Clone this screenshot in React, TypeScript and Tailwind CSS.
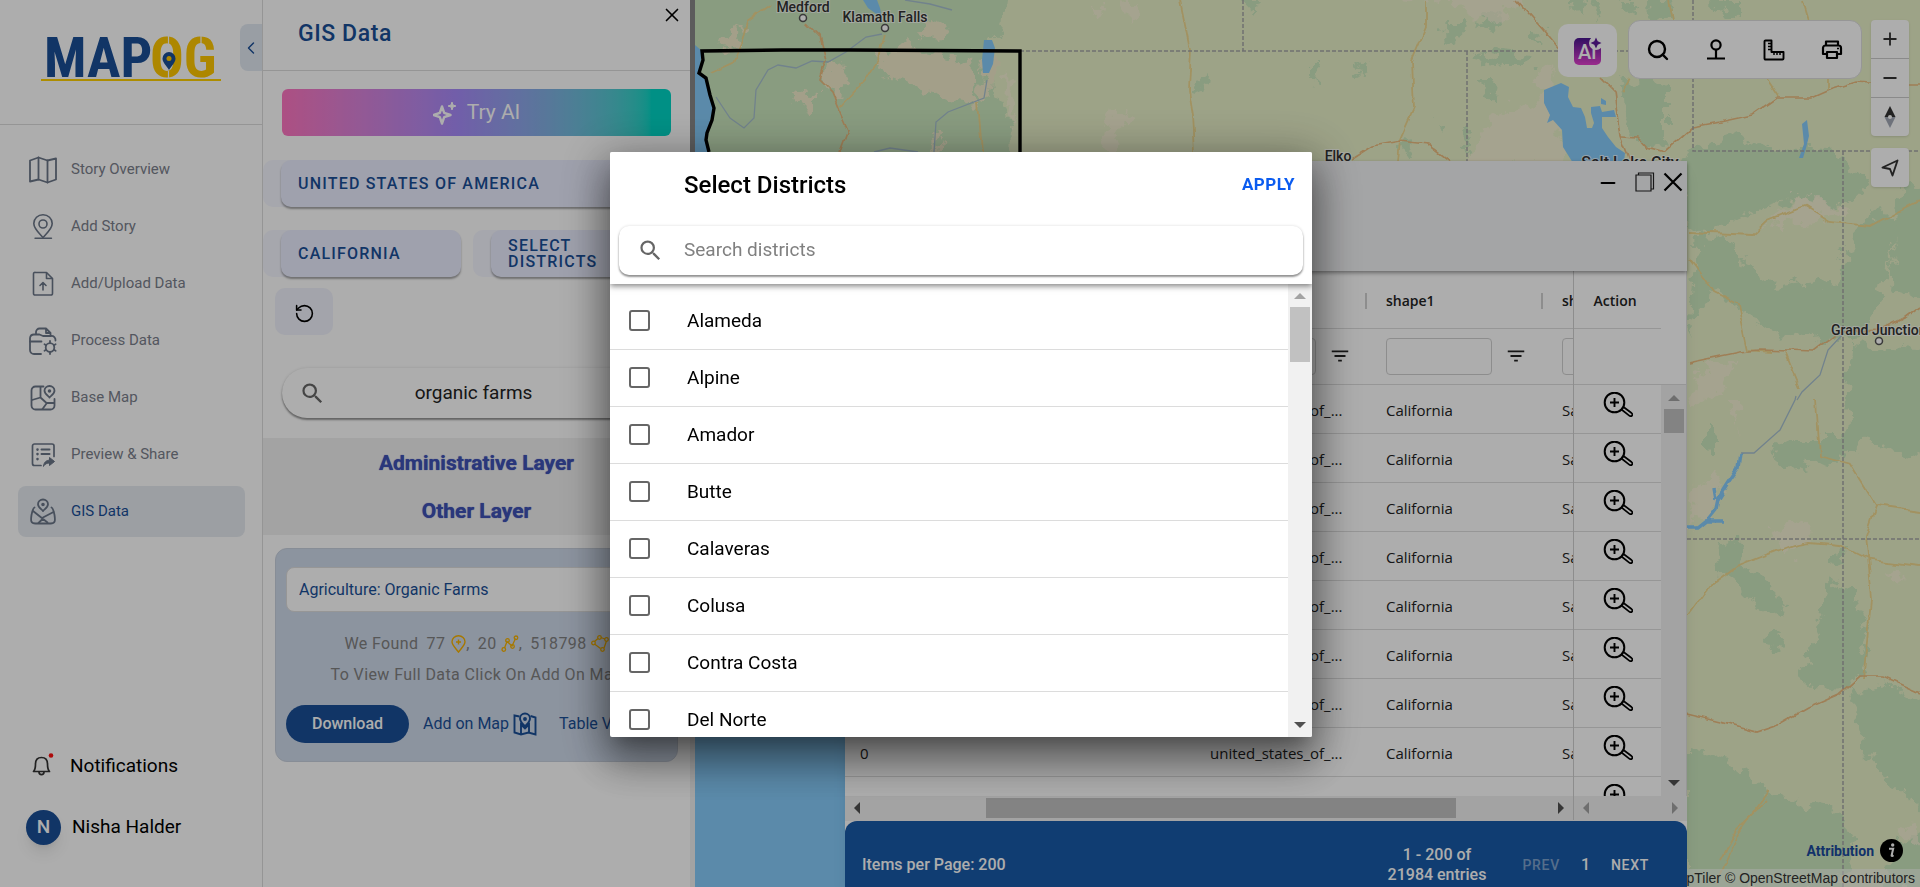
import React, { useState } from 'react';
import { Minus, Plus, RotateCcw, Search, X, ChevronLeft } from 'lucide-react';
import { MdSearch, MdFilterList } from 'react-icons/md';

const districts = ['Alameda', 'Alpine', 'Amador', 'Butte', 'Calaveras', 'Colusa', 'Contra Costa', 'Del Norte'];

const iconProps = {
  width: 28,
  height: 28,
  viewBox: '0 0 28 28',
  fill: 'none',
  stroke: 'currentColor',
  strokeWidth: 1.8,
  strokeLinecap: 'round' as const,
  strokeLinejoin: 'round' as const,
};

const StoryIcon = () => (
  <svg {...iconProps}>
    <path d="M1 4.5 9.5 1.5 18.5 4.5 27 2.5V23.500L18.500 26.500 9.500 23.500 1 25.500Z" />
    <path d="M9.500 1.500V23.500M18.500 4.500V26.500" />
  </svg>
);

const PinIcon = () => (
  <svg {...iconProps} strokeWidth={1.6}>
    <path d="M14 24.500C9 19 4.800 15.500 4.800 10.500a9.200 8.800 0 0 1 18.400 0C23.200 15.500 19 19 14 24.500Z" />
    <circle cx="14" cy="11" r="4" />
    <path d="M6 25.300H22.500" strokeWidth={1.4} />
  </svg>
);

const UploadIcon = () => (
  <svg {...iconProps} strokeWidth={1.6}>
    <path d="M6.500 2.500H17.500L23.500 8.500V23.500a1.500 1.500 0 0 1-1.500 1.500H6a1.500 1.500 0 0 1-1.500-1.500V4A1.500 1.500 0 0 1 6.500 2.500Z" />
    <path d="M17.500 3V8.500H23" />
    <path d="M14 20V13M11 15.500 14 12.500 17 15.500" />
  </svg>
);

const ProcessIcon = () => (
  <svg {...iconProps}>
    <path d="M12 27H5a4 4 0 0 1-4-4V11a4 4 0 0 1 4-3.500H10.500L14 9H22a4 4 0 0 1 4.500 4.500" />
    <path d="M7 7V5a3.500 3.500 0 0 1 3.500-3.500H17L21.500 6V9M17 2V6H21" />
    <path d="M1 14.500H12.500" />
    <circle cx="21" cy="20.500" r="4.300" />
    <path d="M21 14V16M21 25V27M15.500 17.300 17 18.200M25 22.800 26.600 23.700M15.500 23.700 17 22.800M25 18.200 26.600 17.300" />
  </svg>
);

const BaseMapIcon = () => (
  <svg {...iconProps}>
    <path d="M14.500 2.500H6.500A4 4 0 0 0 2.500 6.500V21.500A4 4 0 0 0 6.500 25.500H21.500A4 4 0 0 0 25.500 21.500V15" />
    <path d="M11.500 3V13.500L17.500 19H25M11.500 13.500 3 16M17.500 19.500 13.500 25" />
    <path d="M20.500 13.500C18 11 15.500 9.500 15.500 6.800a5 4.800 0 0 1 10 0C25.500 9.500 23 11 20.500 13.500Z" />
    <circle cx="20.500" cy="7" r="0.900" fill="currentColor" />
  </svg>
);

const PreviewIcon = () => (
  <svg {...iconProps} strokeWidth={1.700}>
    <path d="M12 24.500H5.500A2 2 0 0 1 3.500 22.500V5A2 2 0 0 1 5.500 3H23A2 2 0 0 1 25 5V15.500" />
    <path d="M12.500 8.500H20.500M12.500 13H20.500" strokeWidth={2} />
    <path d="M8.500 8.500V8.600M8.500 13V13.100M8.500 18V18.100" strokeWidth={2.600} />
    <path d="M14.500 25C15 20.500 18 19.200 20.500 19.200V16.500L25.500 20.500 20.500 24.500V22C18 22 16.500 22.800 14.500 25Z" fill="currentColor" strokeWidth={1} />
  </svg>
);

const GisIcon = () => (
  <svg {...iconProps}>
    <path d="M14 13C11.500 10.500 9 9 9 6.300a5 4.800 0 0 1 10 0C19 9 16.500 10.500 14 13Z" />
    <circle cx="14" cy="6.500" r="0.900" fill="currentColor" />
    <path d="M5.500 9.500C4 10 3.500 12 2.500 17 1.500 23.500 2 25.500 6.500 25.500H21.500C26 25.500 26.500 23.500 25.500 17 24.500 12 24 10 22.500 9.500" />
    <path d="M4 13 18.500 24.500M24.500 14 13 20M14 20.500 9.500 25" />
  </svg>
);

const navItems = [
  { label: 'Story Overview', icon: <StoryIcon /> },
  { label: 'Add Story', icon: <PinIcon /> },
  { label: 'Add/Upload Data', icon: <UploadIcon /> },
  { label: 'Process Data', icon: <ProcessIcon /> },
  { label: 'Base Map', icon: <BaseMapIcon /> },
  { label: 'Preview & Share', icon: <PreviewIcon /> },
  { label: 'GIS Data', icon: <GisIcon />, active: true },
];

const Logo = () => (
  <svg className="overflow-visible" width="182" height="60" viewBox="40 24 182 60" role="img" aria-label="MAPOG">
    <g fontFamily="'Liberation Sans Narrow', 'Roboto Condensed', Roboto, sans-serif" fontWeight="700" fontSize="56">
      <text x="44" y="77" fill="#1a4f97">MAP</text>
      <text x="150" y="77" fill="#ffc700">OG</text>
    </g>
    <path d="M41 80H221" stroke="#ffd000" strokeWidth="2" />
    <path d="M169 70C166 65 162.500 62.500 162.500 58.500a6.500 6.500 0 0 1 13 0C175.500 62.500 172 65 169 70Z" fill="#1a4f97" />
    <circle cx="169" cy="58.500" r="2.500" fill="#ffc700" />
    <path d="M168.500 36V44M168.500 71V78M201 36V44" stroke="#fff" strokeWidth="1.200" />
  </svg>
);

const Sidebar = () => (
  <aside className="flex w-[263px] shrink-0 flex-col border-r border-[#dcdcdc] bg-white">
    <div className="flex h-[125px] items-start justify-between border-b border-[#dcdcdc] pl-10 pt-6">
      <Logo />
      <button aria-label="Collapse" className="flex h-[47px] w-[22px] items-center justify-center rounded-l-lg bg-[#e2e9f2] text-[#1a4f97]">
        <ChevronLeft size={20} strokeWidth={1.700} />
      </button>
    </div>
    <nav className="flex flex-col gap-[6px] px-[18px] pr-[17px] pt-[19px]">
      {navItems.map((item) => (
        <a
          key={item.label}
          href="#"
          className={`flex h-[51px] items-center rounded-lg pl-[11px] text-[15px] text-[#6b7688] ${item.active ? 'bg-[#e6ebf1]' : ''}`}
        >
          {item.icon}
          <span className={item.active ? 'ml-3.5 text-[#1a4f97]' : 'ml-3.5 text-[#7b808c]'}>{item.label}</span>
        </a>
      ))}
    </nav>
    <div className="mt-auto flex flex-col gap-[25px] pb-[42px] pl-[26px] text-[19px]">
      <button className="flex h-9 items-center">
        <svg width="34" height="30" viewBox="0 0 34 30" fill="none" stroke="#333" strokeWidth="1.700">
          <path d="M7.500 20.500H23.500C21.500 18.500 21.500 16 21.500 13 21.500 8.500 19 6.500 15.500 6.500S9.500 8.500 9.500 13C9.500 16 9.500 18.500 7.500 20.500Z" strokeLinejoin="round" />
          <path d="M13 21C13 24.500 18 24.500 18 21" />
          <circle cx="25" cy="4.500" r="2.300" fill="#ff1010" stroke="none" />
        </svg>
        <span className="ml-[10px]">Notifications</span>
      </button>
      <button className="flex h-9 items-center">
        <span className="flex size-[35px] items-center justify-center rounded-full bg-[#1a4f97] font-medium text-white shadow-lg">N</span>
        <span className="ml-[11px]">Nisha Halder</span>
      </button>
    </div>
  </aside>
);

const GisPanel = () => (
  <section className="flex min-h-0 w-[427px] shrink-0 flex-col bg-white">
    <header className="flex h-[71px] items-start justify-between border-b border-[#dcdcdc] pl-[35px]">
      <h1 className="mt-[21px] text-[23px] font-medium leading-[26px] tracking-wide text-[#1a4f97]">GIS Data</h1>
      <button aria-label="Close panel" className="mr-[7px] mt-1">
        <X size={22} strokeWidth={1.800} />
      </button>
    </header>
    <button className="mx-[19px] mt-[18px] flex h-[47px] items-center justify-center rounded-md bg-linear-to-r from-[#ff76c1] via-[#a78bfa] via-45% to-[#00d5c5] to-95% text-[21px] text-white">
      <svg width="24" height="24" viewBox="0 0 24 24" fill="none" stroke="#fff" strokeWidth="2.400" strokeLinejoin="round">
        <path d="M9 5.500 11.200 11.800 17.500 14 11.200 16.200 9 22.500 6.800 16.200 0.800 14 6.800 11.800Z" />
        <path d="M19 1 20 4 23 5 20 6 19 9 18 6 15 5 18 4Z" strokeWidth="1" fill="#fff" />
      </svg>
      <span className="ml-2.5">Try AI</span>
    </button>
    <div className="mr-[19px] mt-6 rounded-[10px] bg-[#f5f6ff] pl-[18px]">
      <button className="flex h-[47px] w-full items-center rounded-[10px] bg-[#ebeeff] px-[17px] font-medium tracking-[0.075em] text-[#1a4f97] shadow-[0_2px_2px_rgba(0,0,0,0.35)]">
        UNITED STATES OF AMERICA
      </button>
    </div>
    <div className="mr-[19px] mt-[23px] flex gap-3">
      <div className="flex-1 rounded-[10px] bg-[#f5f6ff] pl-[18px]">
        <button className="flex h-[47px] w-full items-center rounded-[10px] bg-[#ebeeff] px-[17px] font-medium tracking-[0.075em] text-[#1a4f97] shadow-[0_2px_2px_rgba(0,0,0,0.35)]">
          CALIFORNIA
        </button>
      </div>
      <div className="flex-1 rounded-[10px] bg-[#f5f6ff] pl-[18px]">
        <button className="flex h-[47px] w-full items-center rounded-[10px] bg-[#ebeeff] px-[17px] text-left font-medium leading-4 tracking-[0.075em] text-[#1a4f97] shadow-[0_2px_2px_rgba(0,0,0,0.35)]">
          SELECT
          <br />
          DISTRICTS
        </button>
      </div>
    </div>
    <button aria-label="Reset" className="ml-3 mt-[11px] flex h-[47px] w-[58px] items-center justify-center rounded-[10px] bg-[#f0f2fc] pt-1">
      <RotateCcw size={21} strokeWidth={1.800} />
    </button>
    <label className="mx-[19px] mt-[33px] flex h-[50px] items-center rounded-full bg-white pl-[17px] shadow-[0_2px_2px_rgba(0,0,0,0.4),0_0_3px_rgba(0,0,0,0.12)]">
      <MdSearch size={27} className="text-[#666]" />
      <input aria-label="Search layers" defaultValue="organic farms" className="min-w-0 flex-1 bg-transparent pr-[50px] text-center text-[19px] text-[#222] outline-none" />
    </label>
    <div className="mt-5 flex flex-col bg-[#f1f1f1] pt-px text-center text-[21px] font-bold leading-[48px] text-[#3f51b5] [text-shadow:0_0_1px_#3f51b5]">
      <h2>Administrative Layer</h2>
      <h2>Other Layer</h2>
    </div>
    <div className="mx-3 mt-[13px] rounded-xl border border-[#c8d0dd] bg-[#cfdaeb] px-[10px] pb-[18px] pt-[18px] text-[#1a4f97]">
      <input aria-label="Layer" readOnly defaultValue="Agriculture: Organic Farms" className="h-[45px] w-full rounded-lg border border-[#ddd] bg-white px-3 outline-none" />
      <p className="mt-4 flex h-[31px] items-center justify-center gap-2 tracking-wide text-[#808080]">
        <span>We Found</span>
        <span className="flex items-center">
          77
          <svg className="ml-1.5" width="15" height="18" viewBox="0 0 15 18" fill="none" stroke="#f5b100" strokeWidth="1.400">
            <path d="M7.500 17C4 12.500 1 10 1 6.800a6.500 6 0 0 1 13 0C14 10 11 12.500 7.500 17ZM7.500 4.500V9.500M5 7H10" />
          </svg>
          ,
        </span>
        <span className="flex items-center">
          20
          <svg className="ml-1" width="18" height="18" viewBox="0 0 18 18" fill="none" stroke="#f5b100" strokeWidth="1.300">
            <path d="M3.500 13 6 6.500 11 11 14.500 3.500" />
            <circle cx="2.800" cy="14.500" r="1.800" />
            <circle cx="6.500" cy="5.500" r="1.800" />
            <circle cx="11.500" cy="11.500" r="1.800" />
            <circle cx="15" cy="2.800" r="1.800" />
          </svg>
          ,
        </span>
        <span className="flex items-center">
          518798
          <svg className="ml-1" width="18" height="18" viewBox="0 0 18 18" fill="none" stroke="#f5b100" strokeWidth="1.300">
            <path d="M3.500 6.500 7 3.500M9.800 2.500 14 4M15.500 6 13 13M3.500 9 9.500 13.500" />
            <circle cx="2.500" cy="8" r="1.800" />
            <circle cx="8.500" cy="2.500" r="1.800" />
            <circle cx="15.500" cy="4.500" r="1.800" />
            <circle cx="11.500" cy="14.500" r="1.800" />
          </svg>
        </span>
      </p>
      <p className="h-[31px] whitespace-nowrap text-center leading-[31px] tracking-wide text-[#808080]">
        To View Full Data Click On Add On Map
      </p>
      <div className="mt-[15px] flex items-center whitespace-nowrap">
        <button className="h-[38px] w-[123px] rounded-full bg-[#1a4f97] font-medium text-white">Download</button>
        <button className="ml-3.5 flex items-center gap-1">
          Add on Map
          <svg width="24" height="24" viewBox="0 0 24 24" fill="none" stroke="#1a4f97" strokeWidth="1.900">
            <path d="M6.500 4.500 1.500 3.500V20.500L8 22.500 15.500 20.500 22.500 22.500V5.500L17.500 4" />
            <path d="M12 14.500C9.500 11.500 7 9.500 7 6.500a5 5 0 0 1 10 0C17 9.500 14.500 11.500 12 14.500ZM8 22V12.500L12 16.500 16 12.500V20.500" />
            <circle cx="12" cy="7" r="1" fill="#1a4f97" />
          </svg>
        </button>
        <button className="ml-[22px]">Table View</button>
      </div>
    </div>
  </section>
);

const MapCanvas = () => (
  <svg className="absolute inset-0 h-full w-full" viewBox="695 0 1225 887" preserveAspectRatio="xMinYMin slice">
    <defs>
      <filter id="rough" x="-5%" y="-5%" width="110%" height="110%">
        <feTurbulence type="fractalNoise" baseFrequency="0.07" numOctaves="4" seed="8" />
        <feDisplacementMap in="SourceGraphic" scale="26" xChannelSelector="R" yChannelSelector="G" />
      </filter>
      <filter id="wobble">
        <feTurbulence type="fractalNoise" baseFrequency="0.05" numOctaves="3" seed="3" />
        <feDisplacementMap in="SourceGraphic" scale="8" xChannelSelector="R" yChannelSelector="G" />
      </filter>
    </defs>
    <rect x="695" width="1225" height="887" fill="#e8f0c8" />

    {/* forests */}
    <g filter="url(#rough)" fill="#cae6bd">
      <path d="M680-20H1010L1004 30 985 48 995 90 1012 130 1010 170H680Z" />
      <path d="M1240 0H1262L1252 14Z" />
      <path d="M1192 88 1207 75 1206 88 1196 94Z" />
      <path d="M1484 10 1500 12 1496 30 1480 26ZM1444 22 1462 22 1460 40 1446 44ZM1564 0H1584L1580 14ZM1590 0H1602L1600 20ZM1618 0H1636L1630 14ZM1646 0H1672L1674 22 1650 18ZM1706 0H1740V18L1722 14Z" />
      <path d="M1470 60 1500 54 1534 56 1530 66 1500 66 1476 64ZM1484 80 1494 80 1492 100 1486 96ZM1534 32 1542 34 1540 46 1534 42ZM1355 60 1368 66 1362 78ZM1310 66 1320 66 1318 84 1310 82Z" />
      <path d="M1620 86 1650 78 1668 86 1668 140 1650 150 1632 138 1622 110Z" />
      <path d="M1438 120 1446 128 1440 136ZM1400 142 1412 140 1410 156 1402 154ZM1462 132 1470 130 1468 158Z" />
      <path d="M1680 160 1700 150 1730 138 1764 148 1836 150 1850 164 1866 184 1838 210 1800 196 1764 208 1740 216 1700 234 1684 220Z" />
      <path d="M1696 236 1734 242 1746 268 1780 286 1836 280 1846 250 1866 212 1900 216 1880 300 1864 336 1810 340 1770 330 1740 310 1710 290 1688 330Z" />
      <path d="M1900 180 1930 190 1930 300 1890 290Z" />
      <path d="M1850 344 1930 350 1930 460 1900 452 1868 440 1836 460 1790 470 1768 450 1790 440 1846 440Z" />
      <path d="M1706 420 1716 430 1716 456 1706 446ZM1716 545 1740 540 1742 566 1768 582 1786 606 1782 616 1750 600 1720 574ZM1830 552 1842 550 1844 564 1830 562Z" />
      <path d="M1826 580 1852 590 1868 636 1862 672 1842 692 1816 690 1796 672 1814 650ZM1776 630 1786 636 1780 650 1764 644Z" />
      <path d="M1684 746 1730 760 1760 786 1790 800 1840 812 1856 850 1840 890H1684ZM1852 690 1890 684 1930 706V810L1896 790 1866 750Z" />
      <path d="M1900 840 1930 830V890H1880Z" />
    </g>

    {/* open land between the forests */}
    <g filter="url(#rough)" fill="#f1ebca">
      <path d="M878 50 906 44 930 54 972 60 980 104 952 100 912 84 884 74Z" />
      <path d="M826 62 846 66 842 100 822 90ZM725 36 744 26 738 50 722 54ZM934 128 950 130 936 152ZM796 90 812 92 812 116 802 112ZM930 20 950 28 940 40 918 34ZM985 42 996 60 990 100 982 96Z" />
    </g>

    {/* dry ground */}
    <g filter="url(#rough)" fill="#faf1d8" opacity="0.700">
      <path d="M1320-10H1530L1500 22 1468 16 1450 0Z" />
      <path d="M1536 68 1556 72 1550 100 1562 140 1560 164H1464L1490 120 1520 104 1540 100Z" />
      <path d="M1092 0 1104 14 1098 16ZM1126 0 1140 0 1130 22ZM1112 108 1128 112 1116 150H1100ZM1006 70 1014 90 1012 130 1004 100Z" />
      <path d="M1700 480 1716 470 1724 490 1700 520 1688 530ZM1770 530 1800 520 1816 534 1790 556ZM1796 196 1816 200 1850 214 1800 224 1760 226ZM1728 400 1740 400 1734 430Z" />
      <path d="M1890 570 1904 572 1900 584ZM1896 830 1920 820V850ZM1700 370 1740 360 1720 390 1690 410Z" />
    </g>

    {/* water */}
    <g fill="#86ccfb">
      <path d="M695 45 702 51 699 73 708 82 713 110 706 136 709 152 760 400 860 620V887H695Z" />
      <path d="M1544 90 1561 83 1569 87 1568 97 1573 107 1581 108 1585 117 1587 128 1592 128 1594 123 1591 113 1591 107 1600 106 1602 112 1614 110 1616 117 1602 117 1602 128 1608 137 1616 147 1625 153 1624 163H1573L1563 147 1562 130 1553 120 1547 123 1550 115 1544 103Z" />
      <path d="M1601 98 1606 101 1606 105 1601 104ZM863 0H877L880 8 882 18 868 8ZM984 40 992 40 995 48 993 64 989 73H983L982 60Z" />
      <path d="M1802 124 1807 120 1809 136 1806 148 1803 158 1799 158 1804 144Z" />
    </g>
    <path d="M1741 453 1739 468 1728 484 1718 500 1716 510 1708 520 1698 528H1687M1705 521H1722M1716 500 1714 488" fill="none" stroke="#86ccfb" strokeWidth="3.500" filter="url(#wobble)" />
    <g fill="none" stroke="#a7c0cf" strokeWidth="1.300">
      <path d="M716 97 730 118 744 128 754 118 756 90 768 70 778 65 796 68 812 61 828 62 846 52 866 37 882 34M987 80 984 98 948 112 936 122 934 152M905 0 930 4 952 10M874 152 890 148 918 152" />
      <path d="M1741 453H1754L1780 430 1795 400 1796 396M1842 335 1828 350 1820 375 1802 392 1797 400" />
    </g>

    {/* roads */}
    <g fill="none" stroke="#efd88f" strokeWidth="1.800" filter="url(#wobble)">
      <path d="M770 4 748 20 742 44 734 62 712 72M884 34 878 60 866 80 854 92 840 108M978 102 982 152M1180 0 1190 50 1188 90 1192 115 1194 152" />
      <path d="M1427 0V26L1412 62 1414 108 1400 140 1398 161M1668 0 1672 20M1802 0 1808 20M1764 76 1778 97M1828 76V90M1622 92 1630 78" />
      <path d="M1689 232 1752 235 1768 220 1804 206 1830 222 1870 226 1896 212 1920 200M1689 258 1706 280 1714 292 1738 304 1748 350 1770 352M1816 400 1820 456 1850 464 1876 506 1866 536 1872 600 1864 680M1876 506 1920 512M1688 616 1710 586 1738 566 1790 546 1810 542 1840 545 1870 560 1920 566M1785 352 1800 388M1720 860 1736 830 1768 800" />
      <path d="M1770 790 1738 834 1716 884" />
    </g>
    <g fill="none" stroke="#eabb7f" strokeWidth="1.700" filter="url(#wobble)">
      <path d="M806 22 820 36 826 60 820 80 832 92 840 112 848 130 840 152M1516 0 1544 32 1560 52M1350 160 1372 146 1400 141 1428 144 1450 161M1600 78 1614 92 1620 136 1630 161" />
      <path d="M1622 137 1638 138 1646 147 1664 152 1680 138 1692 127 1720 122 1752 115 1776 98 1812 98 1830 90 1856 82 1880 84 1920 84M1687 363 1740 352 1760 350 1814 352 1840 332 1880 330 1904 318 1920 306" />
      <path d="M1687 714 1720 722 1756 732 1780 724 1808 708 1840 694 1860 676 1884 676 1920 692" />
    </g>

    {/* state borders */}
    <path d="M1020 51H1693M1243 0V51M1467 51V161M1693 0V151H1920M1843 151V887M1687 539H1920" fill="none" stroke="#a5a5a5" strokeWidth="1.500" strokeDasharray="4 2" />
    <path d="M709 152 706 140 707 133 712 120 714 108 710 95 706 78 699 73 703 60 702 51 782 50 850 50 1020 51V160" fill="none" stroke="#000" strokeWidth="3.400" />

    <g fontFamily="Roboto, sans-serif" fontSize="14" fontWeight="500" fill="#333" stroke="#fff" strokeOpacity="0.700" strokeWidth="2" paintOrder="stroke">
      <text x="803" y="12" textAnchor="middle">Medford</text>
      <text x="885" y="22" textAnchor="middle">Klamath Falls</text>
      <text x="1338" y="161" textAnchor="middle">Elko</text>
      <text x="1630" y="168" textAnchor="middle" fontSize="16">Salt Lake City</text>
      <text x="1831" y="335">Grand Junction</text>
    </g>
    <g fill="#fff" stroke="#555" strokeWidth="1.500">
      <circle cx="803" cy="18" r="3.500" />
      <circle cx="885" cy="28" r="3.500" />
      <circle cx="1879" cy="341" r="3.500" />
    </g>
  </svg>
);

const toolButton = 'flex flex-1 items-center justify-center';

const MapTools = () => (
  <div className="absolute right-[11px] top-5 flex items-start text-black">
    <button aria-label="AI" className="mr-[11px] mt-1 flex h-[53px] w-[59px] items-center justify-center rounded-[10px] bg-white">
      <svg width="28" height="28" viewBox="0 0 28 28">
        <defs>
          <linearGradient id="ai" x1="0" y1="0" x2="0" y2="1">
            <stop offset="0" stopColor="#4a1690" />
            <stop offset="1" stopColor="#e33fd0" />
          </linearGradient>
        </defs>
        <rect y="1" width="27" height="27" rx="5" fill="url(#ai)" />
        <text x="4" y="22" fill="#fff" fontFamily="Roboto, sans-serif" fontSize="20" fontWeight="500">Ai</text>
        <circle cx="22" cy="6" r="7" fill="#fff" />
        <path d="M22 0.500 23.700 4.300 27.500 6 23.700 7.700 22 11.500 20.300 7.700 16.500 6 20.300 4.300Z" fill="#5a1a98" />
      </svg>
    </button>
    <div className="mr-[9px] flex h-[59px] w-[234px] rounded-xl border border-[#ddd] bg-white">
      <button aria-label="Search map" className={toolButton}><Search size={24} strokeWidth={2.400} /></button>
      <button aria-label="Drop pin" className={toolButton}>
        <svg width="20" height="22" viewBox="0 0 20 22" fill="none" stroke="currentColor" strokeWidth="2.200">
          <circle cx="10" cy="6" r="4.600" />
          <path d="M10 10.500V19.500M1 19.500H19" />
        </svg>
      </button>
      <button aria-label="Measure" className={toolButton}>
        <svg width="22" height="22" viewBox="0 0 22 22" fill="none" stroke="currentColor" strokeWidth="1.900" strokeLinejoin="round">
          <path d="M2.500 1.500H8.500V13H20.500V19.500A1 1 0 0 1 19.500 20.500H2.500A1 1 0 0 1 1.500 19.500V2.500A1 1 0 0 1 2.500 1.500Z" />
          <path d="M5 4.500H8M5 7.500H8M5 10.500H8M11 13V16M14 13V16M17 13V16" strokeWidth="1.500" />
        </svg>
      </button>
      <button aria-label="Print" className={toolButton}>
        <svg width="22" height="20" viewBox="0 0 22 20" fill="none" stroke="currentColor" strokeWidth="2.200" strokeLinejoin="round">
          <path d="M5 5.500V1.500H17V5.500M5 14H2V8A2.500 2.500 0 0 1 4.500 5.500H17.500A2.500 2.500 0 0 1 20 8V14H17M6 12H16V18H6Z" />
          <path d="M16 8.500H18" strokeWidth="1.500" />
        </svg>
      </button>
    </div>
    <div className="flex flex-col gap-3 text-[#333]">
      <div className="flex flex-col divide-y divide-[#ccc] rounded bg-white shadow-sm">
        <button aria-label="Zoom in" className="flex h-[39px] w-[38px] items-center justify-center"><Plus size={20} strokeWidth={2.200} /></button>
        <button aria-label="Zoom out" className="flex h-[39px] w-[38px] items-center justify-center"><Minus size={20} strokeWidth={2.200} /></button>
        <button aria-label="Reset bearing" className="flex h-[38px] w-[38px] items-center justify-center">
          <svg width="12" height="22" viewBox="0 0 12 22">
            <path d="M6 0 11.500 11H0.500Z" fill="#333" />
            <path d="M6 22 11.500 11H0.500Z" fill="#a3a9b5" />
            <circle cx="6" cy="11" r="2" fill="#fff" />
          </svg>
        </button>
      </div>
      <button aria-label="Locate me" className="flex h-[39px] w-[38px] items-center justify-center rounded bg-white shadow-sm">
        <svg width="18" height="18" viewBox="0 0 18 18" fill="none" stroke="currentColor" strokeWidth="1.900" strokeLinejoin="round">
          <path d="M16.500 1.500 1.500 8.500 9 10 11.500 16.500Z" />
        </svg>
      </button>
    </div>
  </div>
);

const ZoomTo = () => (
  <svg width="30" height="26" viewBox="0 0 30 26" fill="none" stroke="currentColor">
    <circle cx="11.500" cy="10.500" r="9.800" strokeWidth="2" />
    <path d="M11.500 6V15M7 10.500H16" strokeWidth="1.900" />
    <path d="M20.500 15 28.500 21C30.500 23 28.500 25 26.500 23.800L18.500 17.500Z" strokeWidth="1.700" />
  </svg>
);

const filterCell = 'flex items-center gap-[13px] pl-[21px]';

const DataWindow = () => (
  <div className="absolute bottom-0 left-[150px] right-[233px] top-[161px] flex flex-col bg-white shadow-lg">
    <div className="z-10 flex h-[110px] shrink-0 justify-end bg-[#f2f3f5] pr-1 pt-[11px] shadow-[0_2px_4px_rgba(0,0,0,0.4)]">
      <button aria-label="Minimise" className="mr-4 h-5"><Minus size={22} strokeWidth={2.200} /></button>
      <button aria-label="Restore" className="mr-2 h-5">
        <svg width="20" height="20" viewBox="0 0 20 20" fill="none" stroke="#222" strokeWidth="1.200">
          <path d="M1 3H16V19H1ZM3.500 3V1H18.500V17H16" />
        </svg>
      </button>
      <button aria-label="Close table" className="h-5">
        <svg width="20" height="20" viewBox="0 0 20 20" stroke="#000" strokeWidth="2.200">
          <path d="M1.500 1.500 18.500 18.500M18.500 1.500 1.500 18.500" />
        </svg>
      </button>
    </div>
    <div className="flex min-h-0 flex-1 overflow-hidden border-r border-[#ddd] font-['Open_Sans',sans-serif] text-[15px] text-[#222]">
      <div className="min-w-0 flex-1 overflow-hidden">
        <table className="w-full table-fixed border-collapse">
          <colgroup>
            <col />
            <col className="w-[176px]" />
            <col className="w-[176px]" />
            <col className="w-[176px]" />
            <col className="w-[32px]" />
            <col className="w-[88px]" />
          </colgroup>
          <thead className="text-left">
            <tr className="h-[57px] border-b border-[#ddd] text-sm">
              <th />
              <th />
              <th />
              <th className="p-0 pt-1 font-semibold"><div className="border-l-2 border-[#d0d0d0] pl-[19px] leading-4">shape1</div></th>
              <th className="overflow-hidden p-0 pt-1 font-semibold"><div className="border-l-2 border-[#d0d0d0] pl-[19px] leading-4">shape2</div></th>
              <th className="border-l border-[#d0d0d0] p-0 pl-5 pt-1 font-semibold">Action</th>
            </tr>
            <tr className="h-14 border-b border-[#ddd]">
              <th />
              <th />
              <th className="p-0">
                <div className={filterCell}>
                  <input aria-label="Filter shape0" className="h-[37px] w-[106px] rounded border border-[#d0d0d0]" />
                  <MdFilterList size={22} />
                </div>
              </th>
              <th className="p-0">
                <div className={filterCell}>
                  <input aria-label="Filter shape1" className="h-[37px] w-[106px] rounded border border-[#d0d0d0]" />
                  <MdFilterList size={22} />
                </div>
              </th>
              <th className="overflow-hidden p-0">
                <div className={filterCell}>
                  <input aria-label="Filter shape2" className="h-[37px] w-[106px] shrink-0 rounded border border-[#d0d0d0]" />
                </div>
              </th>
              <th className="border-l border-[#d0d0d0]" />
            </tr>
          </thead>
          <tbody>
            {Array.from({ length: 9 }, (_, i) => (
              <tr key={i} className="h-[49px] border-b border-[#ddd]">
                <td className="p-0 pl-[15px] pt-1">{i < 8 ? '0' : ''}</td>
                <td />
                <td className="truncate p-0 pl-[21px] pt-1">{i < 8 ? 'united_states_of_...' : ''}</td>
                <td className="p-0 pl-[21px] pt-1">{i < 8 ? 'California' : ''}</td>
                <td className="overflow-hidden whitespace-nowrap p-0 pl-[21px] pt-1">{i < 8 ? 'San' : ''}</td>
                <td className="border-l border-[#d0d0d0] p-0 pb-2 pl-[29px] text-black"><button aria-label="Zoom to feature" className="block"><ZoomTo /></button></td>
              </tr>
            ))}
          </tbody>
        </table>
      </div>
      <div className="flex w-[25px] flex-col pt-[113px]">
        <div className="flex flex-1 flex-col items-center border-t border-[#ddd] bg-[#f1f1f1] pb-[10px] pt-[10px]">
          <span className="border-x-[6px] border-b-[6px] border-x-transparent border-b-[#a3a3a3]" />
          <span className="mt-2 h-6 w-5 bg-[#c1c1c1]" />
          <span className="mt-auto border-x-[6px] border-t-[6px] border-x-transparent border-t-[#505050]" />
        </div>
      </div>
    </div>
    <div className="flex h-[25px] shrink-0 items-center bg-[#f1f1f1] pb-px">
      <div className="flex h-full flex-1 items-center border-r border-[#d0d0d0] px-[9px]">
        <span className="border-y-[6px] border-r-[6px] border-y-transparent border-r-[#505050]" />
        <span className="ml-[126px] mr-[102px] h-5 flex-1 bg-[#c1c1c1]" />
        <span className="border-y-[6px] border-l-[6px] border-y-transparent border-l-[#505050]" />
      </div>
      <div className="flex w-[113px] justify-between px-[9px]">
        <span className="border-y-[6px] border-r-[6px] border-y-transparent border-r-[#a3a3a3]" />
        <span className="border-y-[6px] border-l-[6px] border-y-transparent border-l-[#a3a3a3]" />
      </div>
    </div>
    <div className="flex h-[66px] shrink-0 items-center rounded-t-xl bg-[#195aa8] pl-[17px] pr-[38px] pt-[22px] font-medium text-white">
      <span>Items per Page: 200</span>
      <span className="ml-auto mr-9 text-center leading-5">
        1 - 200 of
        <br />
        21984 entries
      </span>
      <button className="text-sm tracking-wider text-white/45">PREV</button>
      <span className="mx-[21px]">1</span>
      <button className="text-sm tracking-wider">NEXT</button>
    </div>
  </div>
);

const DistrictDialog = () => {
  const [selected, setSelected] = useState<string[]>([]);

  const toggle = (name: string) => {
    setSelected((prev) => (prev.includes(name) ? prev.filter((d) => d !== name) : [...prev, name]));
  };

  return (
    <div className="fixed inset-0 z-50 flex items-center justify-center bg-black/32 pl-0.5 pt-0.5">
      <div
        role="dialog"
        aria-label="Select Districts"
        className="flex h-[66vh] w-[702px] flex-col overflow-hidden rounded-xs bg-white shadow-[0_11px_15px_-7px_rgba(0,0,0,0.2),0_24px_38px_3px_rgba(0,0,0,0.3),0_9px_46px_8px_rgba(0,0,0,0.3)]"
      >
        <div className="z-10 bg-white px-[9px] pb-[9px] shadow-[0_2px_6px_rgba(0,0,0,0.5)]">
          <div className="flex h-[74px] items-center justify-between pb-2 pl-[65px] pr-2">
            <h2 className="text-2xl font-medium">Select Districts</h2>
            <button className="text-[17px] font-bold tracking-wide text-[#0b5cf0]">APPLY</button>
          </div>
          <label className="flex h-[49px] items-center rounded-[10px] bg-white pl-[18px] shadow-[0_2px_2px_rgba(0,0,0,0.4),0_0_3px_rgba(0,0,0,0.15)]">
            <MdSearch size={27} className="text-[#666]" />
            <input placeholder="Search districts" aria-label="Search districts" className="ml-5 flex-1 text-[19px] outline-none placeholder:text-[#808080]" />
          </label>
        </div>
        <div className="flex min-h-0 flex-1">
          <ul className="flex-1 overflow-hidden pt-[9px]">
            {districts.map((name) => (
              <li key={name} className="h-[57px] border-b border-[#dcdcdc]">
                <label className="flex h-full items-center gap-[37px] pl-[19px] text-[19px]">
                  <input
                    type="checkbox"
                    checked={selected.includes(name)}
                    onChange={() => toggle(name)}
                    className="size-[21px] appearance-none rounded-[3px] border-2 border-[#666] checked:bg-[#3f51b5]"
                  />
                  {name}
                </label>
              </li>
            ))}
          </ul>
          <div className="flex w-6 flex-col items-center bg-[#f1f1f1] py-[9px]">
            <span className="border-x-[6px] border-b-[6px] border-x-transparent border-b-[#a3a3a3]" />
            <span className="mt-2 h-[55px] w-5 bg-[#c1c1c1]" />
            <span className="mt-auto border-x-[6px] border-t-[6px] border-x-transparent border-t-[#505050]" />
          </div>
        </div>
      </div>
    </div>
  );
};

const App: React.FC = () => {
  return (
    <div className="relative flex h-screen overflow-hidden bg-white font-['Roboto',sans-serif] text-black">
      <Sidebar />
      <GisPanel />
      <div className="w-[5px] shrink-0 bg-[#f1f1f1]">
        <div className="h-3/4 bg-[#888]" />
      </div>
      <main className="relative flex-1 overflow-hidden">
        <MapCanvas />
        <MapTools />
        <a href="#" className="absolute bottom-[25px] right-[17px] flex items-center gap-1.5 text-sm font-bold text-[#1a4a9c]">
          Attribution
          <svg width="23" height="23" viewBox="0 0 23 23">
            <circle cx="11.500" cy="11.500" r="11.500" fill="#000" />
            <circle cx="12.700" cy="6" r="1.700" fill="#fff" />
            <path d="M9 9.800H13.200L11.600 16.500C11.500 17.300 12.300 17.200 13.500 16.200" fill="none" stroke="#fff" strokeWidth="2" />
          </svg>
        </a>
        <p className="absolute bottom-0 right-0 bg-white/50 px-[5px] font-['Liberation_Sans',sans-serif] text-sm leading-[18px] text-[#333]">
          © MapTiler © OpenStreetMap contributors
        </p>
        <DataWindow />
      </main>
      <DistrictDialog />
    </div>
  );
};

export default App;
